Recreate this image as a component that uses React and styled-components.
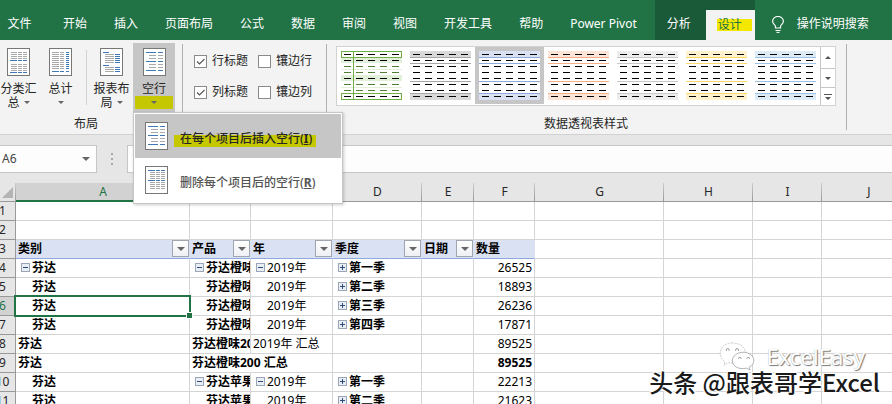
import React from 'react';
import styled, { createGlobalStyle, css } from 'styled-components';

const GlobalStyle = createGlobalStyle`
  *, *::before, *::after {
    box-sizing: border-box;
  }

  body {
    margin: 0;
    font: 12px/14px "Noto Sans", "Noto Sans CJK SC", sans-serif;
    color: #262626;
    background: #fff;
  }

  button, input {
    font: inherit;
    color: inherit;
  }
`;

const Page = styled.div`
  position: relative;
  height: 100vh;
  overflow: hidden;
`;

/* ---------- tabs ---------- */

const TabBar = styled.nav`
  display: flex;
  align-items: stretch;
  height: 40px;
  background: #217346;
  color: #fff;
  white-space: nowrap;
`;

const Tab = styled.button`
  border: 0;
  padding: 8px 14px 0 13px;
  background: none;
  color: #fff;
`;

const FileTab = styled(Tab)`
  width: 50px;
  padding: 8px 18px 0 7px;
`;

const ContextTabs = styled.div`
  display: flex;
  align-items: stretch;
  margin-left: 4px;
  background: #1b5a38;
`;

const ContextTab = styled(Tab)`
  padding: 8px 15px 0 12px;
`;

const ActiveTab = styled(Tab)`
  margin-top: 10px;
  padding: 0 3px 0 11px;
  background: #f3f3f3;
  color: #217346;
`;

const TabMark = styled.span`
  display: block;
  width: 35px;
  padding-left: 1px;
  line-height: 12px;
  text-align: left;
  background: #f4e800;
`;

const TellMe = styled.button`
  display: flex;
  align-items: center;
  gap: 13px;
  border: 0;
  padding: 8px 0 0 17px;
  background: none;
  color: #fff;
`;

/* ---------- ribbon ---------- */

const Ribbon = styled.div`
  display: flex;
  height: 95px;
  padding-top: 3px;
  background: #f3f3f3;
  border-bottom: 1px solid #d2d2d2;
  white-space: nowrap;
`;

const Group = styled.section`
  position: relative;
  display: flex;
  flex-direction: column;
  justify-content: space-between;

  &::after {
    content: '';
    position: absolute;
    top: 1px;
    right: 0;
    width: 1px;
    height: 86px;
    background: #b1b1b1;
  }
`;

const StylesGroup = styled(Group)`
  padding: 0 11px 0 9px;
`;

const GroupTitle = styled.div`
  padding: 0 ${(p) => p.$inset || 0}px 3px 0;
  text-align: center;
`;

const LayoutButtons = styled.div`
  display: flex;
  padding-right: 8px;
`;

const BigButton = styled.button`
  display: flex;
  flex-direction: column;
  align-items: center;
  width: ${(p) => p.$width}px;
  height: 69px;
  border: 0;
  padding: 5px 0 0;
  background: ${(p) => (p.$open ? '#c6c6c6' : 'none')};
`;

const BigLabel = styled.span`
  margin-top: 6px;
`;

const BigTail = styled.span`
  display: flex;
  align-items: center;
  justify-content: center;
  gap: 4px;
  width: 38px;
  height: 13px;
  background: ${(p) => (p.$marked ? '#c5c800' : 'none')};
`;

const Divider = styled.i`
  width: 1px;
  height: 55px;
  margin: 7px 3px 0 2px;
  background: #d2d2d2;
`;

const Arrow = styled.i`
  border: solid transparent;
  border-width: ${(p) => (p.$large ? '4px 4px 0' : '3px 3px 0')};
  border-top-color: #666;
`;

const Options = styled.div`
  display: grid;
  grid-template-columns: 64px 69px;
  row-gap: 17px;
  padding: 11px 0 0 11px;
`;

const Option = styled.label`
  display: flex;
  align-items: center;
  gap: 5px;
`;

const CheckBox = styled.input`
  appearance: none;
  width: 13px;
  height: 13px;
  margin: 0;
  border: 1px solid #8a8a8a;
  background: #fff;

  &:checked {
    background: #fff
      url("data:image/svg+xml,%3Csvg xmlns='http://www.w3.org/2000/svg' viewBox='0 0 11 11'%3E%3Cpath d='M2 5.5l2.5 2.5L9.500 3' fill='none' stroke='%23555' stroke-width='1.100'/%3E%3C/svg%3E");
  }
`;

const Gallery = styled.div`
  display: flex;
  height: 60px;
  margin-top: 3px;
  background: #fff;
  border: 1px solid #d2d2d2;
`;

const StyleButton = styled.button`
  width: 69px;
  height: 57px;
  border: 0;
  padding: 4px;
  line-height: 0;
  background: ${(p) => (p.$selected ? '#c6c6c6' : 'none')};
`;

const GalleryScroll = styled.div`
  display: grid;
  grid-template-rows: 21px 19px 18px;
  width: 15px;
  border-left: 1px solid #c6c6c6;
`;

const ScrollButton = styled.button`
  display: flex;
  align-items: center;
  justify-content: center;
  border: 0;
  padding: 0;
  background: #fff;

  & + & {
    border-top: 1px solid #c6c6c6;
  }
`;

/* ---------- drop-down menu ---------- */

const Menu = styled.div`
  position: absolute;
  z-index: 5;
  top: 112px;
  left: 133px;
  width: 210px;
  padding: 1px;
  background: #fff;
  border: 1px solid #c6c6c6;
  box-shadow: 1px 1px 3px rgba(0, 0, 0, 0.2);
`;

const MenuItem = styled.button`
  display: flex;
  align-items: center;
  gap: 6px;
  width: 100%;
  height: 44px;
  border: 0;
  padding: 0 10px;
  white-space: nowrap;
  font-weight: 500;
  color: ${(p) => (p.$active ? '#262626' : '#555')};
  background: ${(p) => (p.$active ? '#c6c6c6' : '#fff')};

  u {
    font-weight: 700;
  }
`;

const MenuText = styled.span`
  padding: 6px 4px 1px 6px;
  ${(p) =>
    p.$marked &&
    css`
      background: linear-gradient(#c5c800, #c5c800) 0 100% / 100% 12px no-repeat;
    `}
`;

/* ---------- formula bar ---------- */

const FormulaBar = styled.div`
  display: flex;
  height: 48px;
  padding: 10px 0;
  background: #e6e6e6;
`;

const NameBox = styled.div`
  display: flex;
  align-items: center;
  width: 97px;
  padding-right: 6px;
  background: #fdfdfd;
  border: solid #c6c6c6;
  border-width: 1px 1px 1px 0;
`;

const NameInput = styled.input`
  flex: 1;
  min-width: 0;
  border: 0;
  padding: 0 2px;
  background: none;
  color: #444;
`;

const Grip = styled.div`
  display: flex;
  flex-direction: column;
  justify-content: center;
  gap: 3px;
  width: 30px;
  padding-left: 14px;

  i {
    width: 2px;
    height: 2px;
    background: #a6a6a6;
  }
`;

const FormulaInput = styled.input`
  flex: 1;
  min-width: 0;
  border: solid #c6c6c6;
  border-width: 1px 0 1px 1px;
  background: #fdfdfd;
`;

/* ---------- sheet ---------- */

/* the last column runs on past the window edge */
const Sheet = styled.table`
  width: calc(100% + 24px);
  table-layout: fixed;
  border-collapse: separate;
  border-spacing: 0;
  color: #000;
  line-height: 16px;
`;

const ColumnHead = styled.th`
  height: 19px;
  padding: 0;
  font-weight: 400;
  color: ${(p) => (p.$active ? '#217346' : '#262626')};
  background:
    linear-gradient(#ccc, #999) 100% 0 / 1px 100% no-repeat,
    ${(p) => (p.$active ? '#d2d2d2' : '#e6e6e6')};
  border-bottom: ${(p) => (p.$active ? '2px solid #217346' : '1px solid #999')};
`;

const Corner = styled(ColumnHead)`
  padding-left: 2px;
  line-height: 0;
  text-align: left;
`;

const RowHead = styled.th`
  height: 19px;
  padding: 0;
  font-weight: 400;
  color: ${(p) => (p.$active ? '#217346' : '#262626')};
  background: ${(p) => (p.$active ? '#d2d2d2' : '#e6e6e6')};
  border: solid #999;
  border-width: 0 1px 1px 0;

  span {
    display: block;
    margin-left: -10px;
  }
`;

const Cell = styled.td`
  position: relative;
  height: 19px;
  padding: 0 2px;
  white-space: nowrap;
  text-align: ${(p) => (p.$right ? 'right' : 'left')};
  font-weight: ${(p) => (p.$bold ? 700 : 400)};
  border: solid #d4d4d4;
  border-width: 0 1px 1px 0;
  overflow: ${(p) => (p.$spill ? 'visible' : 'hidden')};
  ${(p) => p.$spill && 'border-right-color: transparent;'}
  ${(p) => p.$indent && 'padding-left: 16px;'}
  ${(p) => p.$selected && 'overflow: visible;'}
`;

const FieldCell = styled(Cell)`
  background: #d9e1f2;
  border-right-color: #d9e1f2;
  border-bottom-color: #8ea9db;
`;

const FilterButton = styled.button`
  position: absolute;
  top: 0;
  right: 0;
  display: flex;
  align-items: center;
  justify-content: center;
  width: 17px;
  height: 17px;
  border: 1px solid #a0a6b0;
  padding: 0;
  background: linear-gradient(#fff, #eef0f4);
`;

const Toggle = styled.button`
  position: absolute;
  top: 4px;
  left: 5px;
  width: 9px;
  height: 9px;
  border: 0;
  padding: 0;
  line-height: 0;
  background: none;
`;

const Selection = styled.div`
  position: absolute;
  z-index: 2;
  inset: -2px;
  border: 2px solid #217346;
  pointer-events: none;

  &::after {
    content: '';
    position: absolute;
    right: -4px;
    bottom: -4px;
    width: 7px;
    height: 7px;
    background: #217346;
    border: 1px solid #fff;
  }
`;

/* ---------- watermark ---------- */

const Credit = styled.div`
  position: absolute;
  z-index: 4;
  right: 12px;
  bottom: 10px;
  display: flex;
  flex-direction: column;
  align-items: flex-end;
  white-space: nowrap;
`;

const CreditTop = styled.div`
  display: flex;
  align-items: center;
  gap: 10px;
  margin-right: 15px;
  font-size: 22px;
  line-height: 24px;
  color: #fff;
  text-shadow: 1px 1px 1px #777, 0 0 1px #aaa;
`;

const CreditName = styled.div`
  font-family: "Noto Sans CJK SC", sans-serif;
  font-size: 24px;
  font-weight: 500;
  line-height: 24px;
  color: #1a1a1a;
  text-shadow: -1px -1px 0 #fff, 1px -1px 0 #fff, -1px 1px 0 #fff;
`;

/* ---------- drawings ---------- */

const BLUE = '#3f78b5';
const GREY = '#a9a9a9';

// each line: [y, color, [[x, width], ...]]
const THREE = [[4, 6], [11, 4], [16, 4]];
const every = (ys, color, parts) => ys.map((y) => [y, color, parts]);

const PAGE_LINES = {
  subtotal: [
    ...every([4, 6, 8, 10], GREY, THREE),
    [12, BLUE, [[3, 7], [11, 4], [16, 4]]],
    ...every([16, 18, 20, 22], GREY, THREE),
    [24, BLUE, [[3, 7], [11, 4], [16, 4]]],
  ],
  total: [
    ...every([4, 6, 8, 10, 12, 14, 16, 18, 20], GREY, [[3, 7], [11, 4]]),
    ...every([4, 6, 8, 10, 12, 14, 16, 18, 20], BLUE, [[17, 3]]),
    [23, BLUE, [[3, 7], [11, 4], [17, 3]]],
  ],
  report: [
    [4, BLUE, [[3, 6]]],
    ...every([6, 8, 10, 12, 14], GREY, [[5, 9]]),
    ...every([6, 8, 10, 12, 14], BLUE, [[15, 5]]),
    [17, BLUE, [[3, 6]]],
    ...every([19, 21, 23], GREY, [[5, 9]]),
    ...every([19, 21, 23], BLUE, [[15, 5]]),
  ],
  blank: [
    ...every([4, 13, 22], BLUE, [[3, 10], [15, 5]]),
    ...every([7, 10, 16, 19], GREY, [[6, 7], [15, 5]]),
  ],
  remove: [
    ...every([4, 14], BLUE, [[3, 7], [11, 4], [16, 4]]),
    ...every([6, 8, 10, 12, 16, 18, 20, 22], GREY, [[5, 5], [11, 4], [16, 4]]),
  ],
};

const PageIcon = ({ kind }) => (
  <svg width="23" height="28" shapeRendering="crispEdges" aria-hidden="true">
    <rect x="0" y="0" width="23" height="28" fill="#777" />
    <rect x="1" y="1" width="21" height="26" fill="#fff" />
    {PAGE_LINES[kind].map(([y, color, parts]) =>
      parts.map(([x, w]) => (
        <rect key={`${color}${x}-${y}`} x={x} y={y} width={w} height="1" fill={color} />
      ))
    )}
  </svg>
);

const TableSwatch = ({ fill, line }) => (
  <svg width="61" height="49" shapeRendering="crispEdges" aria-hidden="true">
    <rect width="61" height="49" fill="#fff" />
    <rect width="61" height="6" fill={fill} />
    <rect y="43" width="61" height="6" fill={fill} />
    {[6, 12, 30, 42].map((y) => (
      <rect key={y} y={y} width="61" height="1" fill={line} />
    ))}
    {[3, 9, 15, 21, 27, 33, 39, 45].map((y) =>
      [3, 15, 27, 39, 51].map((x) => (
        <rect key={`${x}-${y}`} x={x} y={y} width="7" height="1" fill="#000" />
      ))
    )}
  </svg>
);

const GreenSwatch = () => (
  <svg width="61" height="49" shapeRendering="crispEdges" aria-hidden="true">
    <rect width="61" height="49" fill="#fff" />
    {[7, 24].map((y) => (
      <rect key={y} y={y} width="61" height={y === 7 ? 5 : 6} fill="#e2efda" />
    ))}
    {[18, 36].map((y) => (
      <rect key={y} y={y} width="61" height="1" fill="#e2efda" />
    ))}
    <rect x="12" width="1" height="49" fill="#70ad47" />
    <path
      d="M0 0h61v1H0zM0 6h61v1H0zM0 0h1v7H0zM60 0h1v7h-1zM0 42h61v1H0zM0 48h61v1H0zM0 42h1v7H0zM60 42h1v7h-1z"
      fill="#70ad47"
    />
    {[3, 9, 15, 21, 27, 33, 39, 45].map((y) =>
      [3, 15, 27, 39, 51].map((x) => (
        <rect
          key={`${x}-${y}`}
          x={x}
          y={y}
          width="7"
          height="1"
          fill={[15, 21, 33, 39].includes(y) ? '#548235' : '#000'}
        />
      ))
    )}
  </svg>
);

const Bulb = () => (
  <svg width="12" height="17" viewBox="0 0 12 17" fill="none" stroke="#fff" aria-hidden="true">
    <path d="M3.500 12V10.500C3.500 9 .6 8 .6 5.300A5.400 4.800 0 0 1 11.400 5.300C11.400 8 8.500 9 8.500 10.500V12z" strokeWidth="1.200" />
    <path d="M3.500 14.500h5M4.500 16.400h3" />
  </svg>
);

const ToggleIcon = ({ plus }) => (
  <svg width="9" height="9" shapeRendering="crispEdges" aria-hidden="true">
    <rect width="9" height="9" rx="1" fill="#9aa5b8" />
    <rect x="1" y="1" width="7" height="7" fill="#e9edf4" />
    <rect x="2" y="4" width="5" height="1" fill="#2f4a7d" />
    {plus && <rect x="4" y="2" width="1" height="5" fill="#2f4a7d" />}
  </svg>
);

const ChatLogo = () => (
  <svg width="39" height="28" viewBox="0 0 39 30" fill="#fff" stroke="#bbb" strokeWidth=".8" aria-hidden="true">
    <path d="M14 1C6.500 1 1 5.500 1 12c0 4 2 7 5 9l-1 4 5-3c7 2 18-1 18-10C28 5.500 21.500 1 14 1z" strokeDasharray="2 1" />
    <path d="M26 11c-7 0-12 4-12 9 0 6 7 10 15 8l4 2-1-3c3-2 5-4 5-7 0-5-5-9-11-9z" stroke="#999" />
    <g fill="none" stroke="#777">
      <path d="M7.500 9.500v-1a1.500 1.500 0 0 1 3 0v1M17.500 9.500v-1a1.500 1.500 0 0 1 3 0v1" />
      <path d="M20.500 18a1.500 1.500 0 0 1 3 0M29.500 18a1.500 1.500 0 0 1 3 0" />
    </g>
  </svg>
);

/* ---------- data ---------- */

const TABS = ['开始', '插入', '页面布局', '公式', '数据', '审阅', '视图', '开发工具', '帮助', 'Power Pivot'];

const OPTIONS = [
  ['行标题', true],
  ['镶边行', false],
  ['列标题', true],
  ['镶边列', false],
];

const STYLES = [
  { name: '灰色', fill: '#d9d9d9', line: '#a6a6a6' },
  { name: '蓝色', fill: '#d9e1f2', line: '#8ea9db', selected: true },
  { name: '橙色', fill: '#fce4d6', line: '#f4b084' },
  { name: '浅灰', fill: '#ededed', line: '#c9c9c9' },
  { name: '金色', fill: '#fff2cc', line: '#ffd966' },
  { name: '浅蓝', fill: '#ddebf7', line: '#9bc2e6' },
];

const COLUMNS = [
  ['A', 174],
  ['B', 61],
  ['C', 82],
  ['D', 89],
  ['E', 52],
  ['F', 61],
  ['G', 129],
  ['H', 89],
  ['I', 69],
  ['J', null],
];

const FIELDS = [
  ['类别', true],
  ['产品', true],
  ['年', true],
  ['季度', true],
  ['日期', true],
  ['数量', false],
];

const child = (text, toggle, bold = true) => ({ text, toggle, bold, indent: true });
const quarter = (a, b, c, q, value) => [
  child('芬达', a),
  child(b, c),
  child('2019年', c, false),
  child(q, 'plus'),
  {},
  { text: value, right: true },
];

const ROWS = [
  [],
  [],
  null,
  quarter('minus', '芬达橙味200', 'minus', '第一季', '26525'),
  quarter(null, '芬达橙味200', null, '第二季', '18893'),
  quarter(null, '芬达橙味200', null, '第三季', '26236'),
  quarter(null, '芬达橙味200', null, '第四季', '17871'),
  [
    { text: '芬达', bold: true },
    { text: '芬达橙味200', bold: true },
    { text: '2019年 汇总' },
    {},
    {},
    { text: '89525', right: true },
  ],
  [
    { text: '芬达', bold: true },
    { text: '芬达橙味200 汇总', bold: true, spill: true },
    {},
    {},
    {},
    { text: '89525', right: true, bold: true },
  ],
  quarter(null, '芬达苹果', 'minus', '第一季', '22213'),
  quarter(null, '芬达苹果', null, '第二季', '21623'),
];

const DataCell = ({ cell = {}, selected }) => (
  <Cell
    $bold={cell.bold}
    $right={cell.right}
    $indent={cell.indent}
    $spill={cell.spill}
    $selected={selected}
  >
    {cell.toggle && (
      <Toggle aria-label={cell.toggle === 'plus' ? '展开' : '折叠'}>
        <ToggleIcon plus={cell.toggle === 'plus'} />
      </Toggle>
    )}
    {cell.text}
    {selected && <Selection />}
  </Cell>
);

const Field = ({ name, filter }) => (
  <FieldCell as="th" scope="col" $bold>
    {name}
    {filter && (
      <FilterButton aria-label={`筛选${name}`}>
        <Arrow $large />
      </FilterButton>
    )}
  </FieldCell>
);

const LargeButton = ({ kind, width, label, tail, open }) => (
  <BigButton $width={width} $open={open}>
    <PageIcon kind={kind} />
    <BigLabel>{label}</BigLabel>
    <BigTail $marked={open}>
      {tail}
      <Arrow />
    </BigTail>
  </BigButton>
);

const App = () => (
  <Page>
    <GlobalStyle />
    <TabBar>
      <FileTab>文件</FileTab>
      {TABS.map((tab) => (
        <Tab key={tab}>{tab}</Tab>
      ))}
      <ContextTabs>
        <ContextTab>分析</ContextTab>
        <ActiveTab>
          <TabMark>设计</TabMark>
        </ActiveTab>
      </ContextTabs>
      <TellMe>
        <Bulb />
        操作说明搜索
      </TellMe>
    </TabBar>

    <Ribbon>
      <Group>
        <LayoutButtons>
          <LargeButton kind="subtotal" width={37} label="分类汇" tail="总" />
          <LargeButton kind="total" width={47} label="总计" />
          <Divider />
          <LargeButton kind="report" width={43} label="报表布" tail="局" />
          <LargeButton kind="blank" width={42} label="空行" open />
        </LayoutButtons>
        <GroupTitle $inset={11}>布局</GroupTitle>
      </Group>
      <Group>
        <Options>
          {OPTIONS.map(([label, checked]) => (
            <Option key={label}>
              <CheckBox type="checkbox" defaultChecked={checked} />
              {label}
            </Option>
          ))}
        </Options>
      </Group>
      <StylesGroup>
        <Gallery>
          <StyleButton aria-label="绿色">
            <GreenSwatch />
          </StyleButton>
          {STYLES.map(({ name, fill, line, selected }) => (
            <StyleButton key={name} aria-label={name} $selected={selected}>
              <TableSwatch fill={fill} line={line} />
            </StyleButton>
          ))}
          <GalleryScroll>
            <ScrollButton aria-label="上一行">
              <svg width="6" height="3"><path d="M0 3L3 0 6 3z" fill="#555" /></svg>
            </ScrollButton>
            <ScrollButton aria-label="下一行">
              <svg width="6" height="3"><path d="M0 0h6L3 3z" fill="#555" /></svg>
            </ScrollButton>
            <ScrollButton aria-label="其他">
              <svg width="8" height="6"><path d="M0 0h8v1H0zM1 3h6L4 6z" fill="#555" /></svg>
            </ScrollButton>
          </GalleryScroll>
        </Gallery>
        <GroupTitle>数据透视表样式</GroupTitle>
      </StylesGroup>
    </Ribbon>

    <Menu role="menu">
      <MenuItem role="menuitem" $active>
        <PageIcon kind="blank" />
        <MenuText $marked>
          在每个项目后插入空行(<u>I</u>)
        </MenuText>
      </MenuItem>
      <MenuItem role="menuitem">
        <PageIcon kind="remove" />
        <MenuText>
          删除每个项目后的空行(<u>R</u>)
        </MenuText>
      </MenuItem>
    </Menu>

    <FormulaBar>
      <NameBox>
        <NameInput aria-label="名称框" defaultValue="A6" />
        <Arrow $large />
      </NameBox>
      <Grip>
        <i />
        <i />
        <i />
      </Grip>
      <FormulaInput aria-label="编辑栏" />
    </FormulaBar>

    <Sheet>
      <colgroup>
        <col width="16" />
        {COLUMNS.map(([name, width]) => (
          <col key={name} width={width || undefined} />
        ))}
      </colgroup>
      <thead>
        <tr>
          <Corner>
            <svg width="11" height="11" aria-hidden="true">
              <path d="M11 0v11H0z" fill="#b4b4b4" />
            </svg>
          </Corner>
          {COLUMNS.map(([name]) => (
            <ColumnHead key={name} scope="col" $active={name === 'A'}>
              {name}
            </ColumnHead>
          ))}
        </tr>
      </thead>
      <tbody>
        {ROWS.map((row, r) => (
          <tr key={r}>
            <RowHead scope="row" $active={r === 5}>
              <span>{r + 1}</span>
            </RowHead>
            {COLUMNS.map(([name], c) =>
              !row && FIELDS[c] ? (
                <Field key={name} name={FIELDS[c][0]} filter={FIELDS[c][1]} />
              ) : (
                <DataCell key={name} cell={row ? row[c] : {}} selected={r === 5 && c === 0} />
              )
            )}
          </tr>
        ))}
      </tbody>
    </Sheet>

    <Credit>
      <CreditTop>
        <ChatLogo />
        ExcelEasy
      </CreditTop>
      <CreditName>头条 @跟表哥学Excel</CreditName>
    </Credit>
  </Page>
);

export default App;
